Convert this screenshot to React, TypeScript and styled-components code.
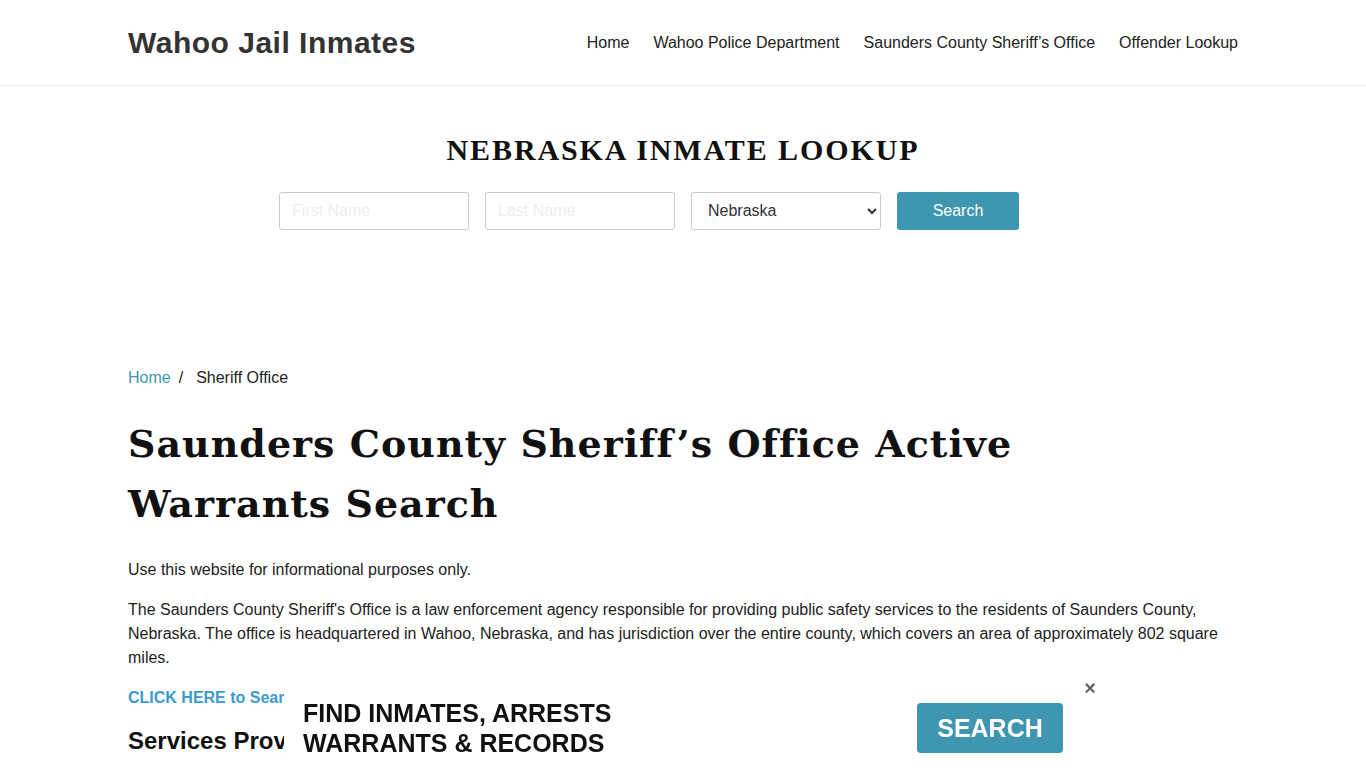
import React from "react";
import styled, { createGlobalStyle } from "styled-components";

const Global = createGlobalStyle`
  html, body { margin: 0; padding: 0; background: #fff; }
  body { font-family: "Liberation Sans", Arial, sans-serif; color: #222; overflow: hidden; }
  * { box-sizing: border-box; }
`;

const Header = styled.header`
  height: 86px;
  border-bottom: 1px solid #f0f0f0;
`;

const Container = styled.div`
  width: 1110px;
  margin: 0 auto;
`;

const HeaderInner = styled(Container)`
  height: 85px;
  display: flex;
  align-items: center;
  justify-content: space-between;
`;

const Brand = styled.a`
  font-size: 30px;
  font-weight: 700;
  color: #333;
  text-decoration: none;
  letter-spacing: 0.5px;
`;

const Nav = styled.nav`
  display: flex;
  gap: 24px;
`;

const NavLink = styled.a`
  font-size: 16px;
  color: #222;
  text-decoration: none;
`;

const Lookup = styled.section`
  padding-top: 46px;
  height: 280px;
`;

const LookupTitle = styled.h2`
  margin: 0;
  text-align: center;
  font-family: "Liberation Serif", "Times New Roman", serif;
  font-weight: 700;
  font-size: 30px;
  letter-spacing: 1.9px;
  line-height: 36px;
  color: #111;
`;

const Form = styled.form`
  display: flex;
  justify-content: center;
  gap: 16px;
  margin-top: 24px;
  padding-right: 68px;
`;

const Field = styled.input`
  width: 190px;
  height: 38px;
  border: 1px solid #ccc;
  border-radius: 3px;
  padding: 0 12px;
  font-family: "Liberation Sans", Arial, sans-serif;
  font-size: 16px;
  &::placeholder { color: #eee; }
`;

const Select = styled.select`
  width: 190px;
  height: 38px;
  border: 1px solid #ccc;
  border-radius: 3px;
  padding: 0 12px 1px;
  background: #fff;
  font-family: "Liberation Sans", Arial, sans-serif;
  font-size: 16px;
  color: #333;
`;

const Button = styled.button`
  width: 122px;
  height: 38px;
  border: none;
  border-radius: 3px;
  background: #3e96b0;
  color: #fff;
  font-family: "Liberation Sans", Arial, sans-serif;
  font-size: 16px;
`;

const Breadcrumb = styled.div`
  display: flex;
  align-items: center;
  font-size: 16px;
  line-height: 24px;
  color: #222;
`;

const Crumb = styled.a`
  color: #3e96b0;
  text-decoration: none;
`;

const Sep = styled.span`
  padding: 0 13px 0 8px;
`;

const Title = styled.h1`
  margin: 24px 0 0;
  font-family: "DejaVu Serif", Georgia, serif;
  font-weight: 700;
  font-size: 38px;
  line-height: 60px;
  letter-spacing: 1px;
  color: #111;
  max-width: 950px;
`;

const Para = styled.p`
  margin: 0 0 16px;
  font-size: 16px;
  line-height: 24px;
  color: #222;
`;

const Content = styled.div`
  margin-top: 24px;
`;

const CtaLink = styled.a`
  display: block;
  font-size: 16px;
  font-weight: 700;
  color: #3b9ad0;
  line-height: 24px;
  text-decoration: none;
`;

const SubHead = styled.h3`
  margin: 16px 0 0;
  font-size: 24px;
  font-weight: 700;
  line-height: 30px;
  color: #111;
`;

const Banner = styled.div`
  position: fixed;
  left: 284px;
  bottom: 0;
  width: 798px;
  height: 93px;
  background: #fff;
  display: flex;
  align-items: center;
  justify-content: space-between;
  padding: 0 19px;
`;

const BannerText = styled.div`
  font-size: 25px;
  font-weight: 700;
  line-height: 30px;
  color: #111;
  padding-top: 13px;
`;

const BannerButton = styled.button`
  width: 146px;
  height: 50px;
  border: none;
  border-radius: 4px;
  background: #3e96b0;
  color: #fff;
  font-family: "Liberation Sans", Arial, sans-serif;
  font-weight: 700;
  font-size: 25px;
  margin-top: 13px;
`;

const Close = styled.span`
  position: absolute;
  right: -14px;
  top: 3px;
  font-size: 20px;
  color: #666;
  font-weight: 700;
  line-height: 20px;
`;

export default function App() {
  return (
    <>
      <Global />
      <Header>
        <HeaderInner>
          <Brand href="#">Wahoo Jail Inmates</Brand>
          <Nav>
            <NavLink href="#">Home</NavLink>
            <NavLink href="#">Wahoo Police Department</NavLink>
            <NavLink href="#">Saunders County Sheriff’s Office</NavLink>
            <NavLink href="#">Offender Lookup</NavLink>
          </Nav>
        </HeaderInner>
      </Header>
      <Lookup>
        <LookupTitle>NEBRASKA INMATE LOOKUP</LookupTitle>
        <Form onSubmit={(e) => e.preventDefault()}>
          <Field placeholder="First Name" />
          <Field placeholder="Last Name" />
          <Select defaultValue="Nebraska">
            <option>Nebraska</option>
          </Select>
          <Button type="submit">Search</Button>
        </Form>
      </Lookup>
      <Container>
        <Breadcrumb>
          <Crumb href="#">Home</Crumb>
          <Sep>/</Sep>
          <span>Sheriff Office</span>
        </Breadcrumb>
        <Title>Saunders County Sheriff’s Office Active Warrants Search</Title>
        <Content>
          <Para>Use this website for informational purposes only.</Para>
          <Para>
            The Saunders County Sheriff's Office is a law enforcement agency responsible for providing public safety services to the residents of Saunders County, Nebraska. The office is headquartered in Wahoo, Nebraska, and has jurisdiction over the entire county, which covers an area of approximately 802 square miles.
          </Para>
          <CtaLink href="#">CLICK HERE to Search Saunders County Active Warrants</CtaLink>
          <SubHead>Services Provided by the Sheriff's Office</SubHead>
        </Content>
      </Container>
      <Banner>
        <BannerText>
          FIND INMATES, ARRESTS
          <br />
          WARRANTS &amp; RECORDS
        </BannerText>
        <BannerButton>SEARCH</BannerButton>
        <Close>×</Close>
      </Banner>
    </>
  );
}
